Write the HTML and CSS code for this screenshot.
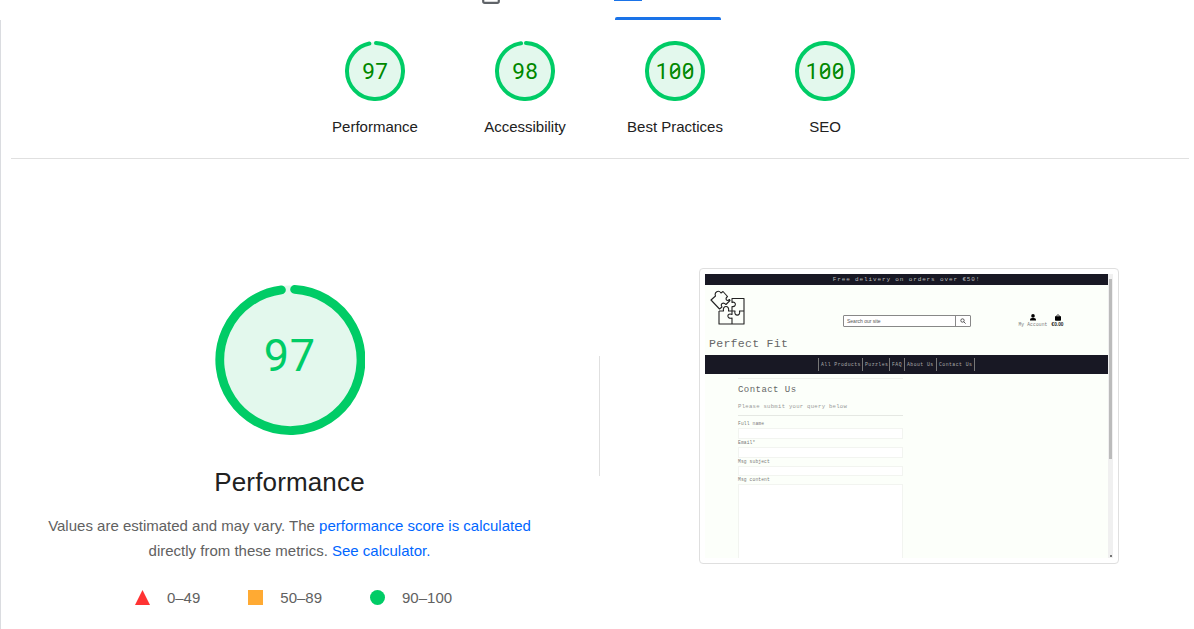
FILE: index.html
```
<!DOCTYPE html>
<html lang="en">
<head>
<meta charset="utf-8">
<title>Performance report</title>
<link rel="stylesheet" href="styles.css">
</head>
<body>
<nav class="tabs">
  <svg class="tab-device" width="18" height="5" viewBox="0 0 18 5"><path d="M1.2 0V1.2Q1.2 2.8 2.8 2.8H15.2Q16.8 2.8 16.8 1.2V0" fill="none" stroke="#5f6368" stroke-width="2.2"/></svg>
  <div class="tab-active"><span class="tab-icon"></span><span class="tab-line"></span></div>
</nav>
<main class="report">
  <section class="scores">
    <div class="score">
      <svg class="ring" viewBox="0 0 60 60"><circle class="ring-fill" cx="30" cy="30" r="29"/><circle class="ring-arc" cx="30" cy="30" r="28" pathLength="100" stroke-dasharray="96.2 3.8"/></svg>
      <span class="num"><i>9</i><i>7</i></span>
      <span class="score-label">Performance</span>
    </div>
    <div class="score">
      <svg class="ring" viewBox="0 0 60 60"><circle class="ring-fill" cx="30" cy="30" r="29"/><circle class="ring-arc" cx="30" cy="30" r="28" pathLength="100" stroke-dasharray="97.2 2.8"/></svg>
      <span class="num"><i>9</i><i>8</i></span>
      <span class="score-label">Accessibility</span>
    </div>
    <div class="score">
      <svg class="ring" viewBox="0 0 60 60"><circle class="ring-fill" cx="30" cy="30" r="29"/><circle class="ring-arc" cx="30" cy="30" r="28"/></svg>
      <span class="num"><i>1</i><i class="zero">0</i><i class="zero">0</i></span>
      <span class="score-label">Best Practices</span>
    </div>
    <div class="score">
      <svg class="ring" viewBox="0 0 60 60"><circle class="ring-fill" cx="30" cy="30" r="29"/><circle class="ring-arc" cx="30" cy="30" r="28"/></svg>
      <span class="num"><i>1</i><i class="zero">0</i><i class="zero">0</i></span>
      <span class="score-label">SEO</span>
    </div>
  </section>
  <section class="detail">
    <div class="summary">
      <div class="big">
        <svg class="big-ring" viewBox="0 0 150 150"><circle class="ring-fill" cx="75" cy="75" r="74.5"/><path class="big-arc" d="M79.6 4.45A70.6 70.6 0 1 1 66.4 4.9" /></svg>
        <span class="big-num"><i>9</i><i>7</i></span>
      </div>
      <h1>Performance</h1>
      <p>Values are estimated and may vary. The <a>performance score is calculated</a><br>directly from these metrics. <a>See calculator.</a></p>
      <div class="legend">
        <span><svg width="15" height="15"><path d="M7.5 0L15 15H0Z" fill="#f33"/></svg>0–49</span>
        <span><svg width="15" height="15"><path d="M0 0H15V15H0Z" fill="#fa3"/></svg>50–89</span>
        <span><svg width="15" height="15"><circle cx="7.5" cy="7.5" r="7.5" fill="#0c6"/></svg>90–100</span>
      </div>
    </div>
    <div class="divider"></div>
    <div class="shot">
      <div class="site">
        <div class="promo">Free delivery on orders over €50!</div>
        <header class="site-head">
          <div class="brand">
            <svg width="36" height="36" viewBox="0 0 36 36" fill="none" stroke="#222" stroke-width="1.1" stroke-linejoin="round"><path d="M9 21V34H34V8.500H22V12.500C26 10.500 27 17.500 22 16.500V21H18.500C20 15 12 15 13.500 21H9M22 21V24.500C17 22 16 29.500 22 28V34M22 21H25C23.500 26.500 31 26.500 29.500 21H34"/><path d="M1 10L5.500 6C4 2 8.500-.5 11 3L13 1.500L17.500 6.500C14.500 9 17 12 19.500 9.500L20 10.500L16 14.500C13 11.500 10 14 12 17L9.500 19L1 10Z"/></svg>
            <div class="brand-name">Perfect Fit</div>
          </div>
          <div class="search"><span>Search our site</span><b><svg width="6" height="6" viewBox="0 0 6 6" fill="none" stroke="#333" stroke-width=".8"><circle cx="2.500" cy="2.500" r="1.700"/><path d="M3.800 3.800L5.600 5.600"/></svg></b></div>
          <div class="account"><svg width="6" height="7" viewBox="0 0 6 7"><circle cx="3" cy="1.900" r="1.800"/><path d="M0 6.500V5.500Q0 4 2 4H4Q6 4 6 5.500V6.500Z"/></svg><span>My Account</span></div>
          <div class="bag"><svg width="6" height="7" viewBox="0 0 6 7"><path d="M0 2.300H6V6Q6 6.700 5.300 6.700H.7Q0 6.700 0 6Z"/><path d="M1.600 2.500V1.700Q3-.3 4.400 1.700V2.500" fill="none" stroke="#000" stroke-width=".8"/></svg><span>€0.00</span></div>
        </header>
        <div class="menu"><span class="m1">All Products</span><span class="m2">Puzzles</span><span class="m3">FAQ</span><span class="m4">About Us</span><span class="m5">Contact Us</span></div>
        <div class="form">
          <div class="form-title">Contact Us</div>
          <div class="form-sub">Please submit your query below</div>
          <label>Full name</label><div class="field"></div>
          <label>Email*</label><div class="field"></div>
          <label>Msg subject</label><div class="field"></div>
          <label>Msg content</label><div class="field area"></div>
        </div>
      </div>
      <div class="scroll"><div class="thumb"></div><span class="down"></span></div>
    </div>
  </section>
</main>
</body>
</html>
```
FILE: styles.css
```
* { box-sizing: border-box; }
body { margin: 0; width: 1194px; height: 629px; overflow: hidden; background: #fff; color: #212121; font-family: "Liberation Sans", Arial, sans-serif; }
svg { display: block; }
i { font-style: normal; }

.tabs { height: 20px; display: flex; padding-left: 482px; }
.tab-active { margin-left: 114px; width: 107px; display: flex; flex-direction: column; justify-content: space-between; }
.tab-icon { width: 28px; height: 1px; background: #1a73e8; }
.tab-line { margin-left: 1px; height: 3px; background: #1a73e8; border-radius: 2px 2px 0 0; }

.report { height: 609px; border-left: 1px solid #dadce0; padding: 0 5px 0 10px; }
.scores { height: 139px; border-bottom: 1px solid #e0e0e0; display: flex; justify-content: center; padding-top: 21px; }
.score { width: 150px; display: grid; grid-template-rows: 60px 1fr; justify-items: center; }
.ring { grid-area: 1 / 1; width: 60px; height: 60px; }
.ring-fill { fill: #e3f8ed; }
.ring-arc { fill: none; stroke: #0c6; stroke-width: 4; stroke-linecap: round; transform: rotate(-88deg); transform-origin: center; }
.num { grid-area: 1 / 1; display: flex; align-self: center; font: 22.500px/60px Roboto, sans-serif; color: #080; }
.num i { width: 13px; text-align: center; }
.zero { position: relative; }
.zero::after { content: ""; position: absolute; left: 2.500px; top: 29px; width: 8px; height: 1.500px; background: #080; transform: rotate(-42deg); }
.score-label { font-size: 15px; line-height: 18px; margin-top: 17px; white-space: nowrap; }

.detail { display: grid; grid-template-columns: 557px 61px 1fr; height: 470px; }
.summary { display: flex; flex-direction: column; align-items: center; padding-top: 126px; }
.big { display: grid; width: 150px; height: 150px; }
.big-ring { grid-area: 1 / 1; width: 150px; height: 150px; }
.big-arc { fill: none; stroke: #0c6; stroke-width: 8.800; stroke-linecap: round; }
.big-num { grid-area: 1 / 1; display: flex; justify-content: center; font: 45px/142px Roboto, sans-serif; color: #0c6; }
.big-num i { width: 26px; text-align: center; }
h1 { margin: 31px 0 0; font-size: 26px; font-weight: 400; line-height: 32px; letter-spacing: .15px; }
p { margin: 15px 0 0; font-size: 15px; line-height: 25px; color: #616161; text-align: center; white-space: nowrap; }
a { color: #06f; }
.legend { display: flex; gap: 48px; margin-top: 26px; margin-left: 8px; font-size: 15px; line-height: 17px; color: #616161; }
.legend span { display: flex; align-items: center; gap: 17px; }
.divider { margin: 197px 0 0 31px; width: 1px; height: 120px; background: #e0e0e0; }

.shot { margin: 109px 0 0 70px; width: 420px; height: 296px; border: 1px solid #dfdfdf; border-radius: 4px; padding: 5px; display: flex; }
.site { width: 403px; height: 284px; background: #fcfffa; font-family: "Liberation Mono", monospace; overflow: hidden; }
.promo { height: 11px; background: #181824; color: #bbb; text-align: center; font: 6px/11px "Liberation Mono", monospace; letter-spacing: .87px; }
.site-head { height: 70px; display: flex; padding-left: 4px; }
.brand { width: 134px; padding-top: 5px; }
.brand svg { margin-left: 1px; }
.brand-name { font-size: 11.500px; letter-spacing: .3px; line-height: 14px; margin-top: 11px; color: #666; white-space: nowrap; }
.search { width: 128px; height: 12px; margin-top: 30px; border: 1px solid #888; border-radius: 1px; display: flex; justify-content: space-between; font: 5px/11px "Liberation Sans", sans-serif; color: #555; padding-left: 3px; background: #fff; }
.search b { width: 15px; border-left: 1px solid #888; display: grid; place-items: center; }
.account, .bag { display: flex; flex-direction: column; align-items: center; padding-top: 29px; white-space: nowrap; }
.account { margin-left: 47px; width: 30px; font-size: 4.600px; letter-spacing: .15px; line-height: 7px; color: #777; }
.bag { margin-left: 3px; width: 13px; font: bold 4.800px/7px "Liberation Sans", sans-serif; color: #222; }
.menu { height: 19px; background: #181824; padding: 3px 0 3px 113px; display: flex; font-size: 4.800px; line-height: 13px; color: #aaa; white-space: nowrap; }
.menu span { border-left: 1px solid #777; padding-left: 2px; letter-spacing: .45px; }
.m1 { width: 44px; }
.m2 { width: 27px; }
.m3 { width: 15px; }
.m4 { width: 32px; }
.menu .m5 { width: 39px; border-right: 1px solid #777; }
.form { margin: 4px 0 0 33px; width: 165px; border-top: 1px solid #eef1ec; color: #777; }
.form-title { font-size: 9px; letter-spacing: .45px; line-height: 12px; margin-top: 5px; color: #666; }
.form-sub { font-size: 5.600px; letter-spacing: .28px; line-height: 8px; margin-top: 7px; height: 13px; border-bottom: 1px solid #e5e8e3; color: #999; }
label { display: block; font-size: 4.600px; letter-spacing: .14px; line-height: 8px; height: 8px; }
.form-sub + label { height: 12px; padding-top: 4px; }
.field { height: 10.800px; border: 1px solid #f2f4f0; background: #fff; }
.area { height: 90px; }
.scroll { width: 5px; height: 284px; background: #f0f0f0; padding: 5px 1px 1px; display: flex; flex-direction: column; justify-content: space-between; align-items: center; }
.thumb { width: 3px; height: 180px; background: #bbb; }
.down { width: 2px; height: 2px; background: #777; }
```
